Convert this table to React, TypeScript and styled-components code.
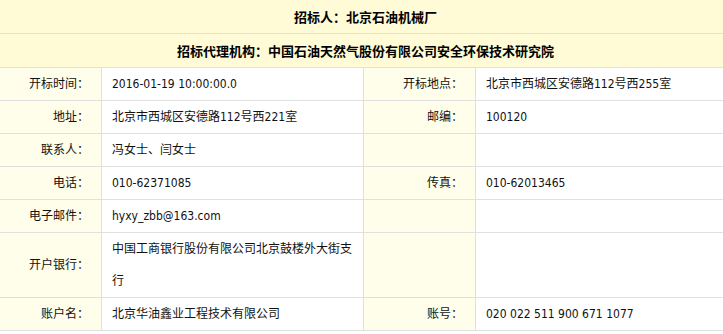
import React from "react";
import styled, { createGlobalStyle } from "styled-components";

const Global = createGlobalStyle`
  html, body { margin: 0; padding: 0; background: #fff; overflow: hidden; }
  body { font-family: "DejaVu Sans Condensed", "DejaVu Sans", "Noto Sans CJK SC", sans-serif; }
`;

const Table = styled.div`
  width: 731px;
  display: grid;
  grid-template-columns: 101px 261px 111px 1fr;
  grid-template-rows: 33px 33px repeat(5, 32px) 64px 32px;
  gap: 1px;
  background: #e0e0e0;
  border-bottom: 1px solid #e0e0e0;
  font-size: 12px;
  color: #111;
`;

const HeaderCell = styled.div`
  grid-column: 1 / -1;
  line-height: 33px;
  background: #fffbd7;
  text-align: center;
  font-family: "Noto Sans CJK SC", sans-serif;
  font-weight: bold;
  font-size: 13px;
  color: #000;
`;

const Label = styled.div<{ $tall?: boolean }>`
  background: #fefeea;
  text-align: right;
  padding-right: 12px;
  line-height: ${(p) => (p.$tall ? "64px" : "32px")};
  white-space: nowrap;
`;

const Value = styled.div`
  background: #fff;
  padding: 0 10px;
  line-height: 32px;
`;

const RowGroup = styled.div`
  display: contents;
`;

type Row = { l1: string; v1: string; l2?: string; v2?: string; tall?: boolean };

const rows: Row[] = [
  { l1: "开标时间：", v1: "2016-01-19 10:00:00.0", l2: "开标地点：", v2: "北京市西城区安德路112号西255室" },
  { l1: "地址：", v1: "北京市西城区安德路112号西221室", l2: "邮编：", v2: "100120" },
  { l1: "联系人：", v1: "冯女士、闫女士" },
  { l1: "电话：", v1: "010-62371085", l2: "传真：", v2: "010-62013465" },
  { l1: "电子邮件：", v1: "hyxy_zbb@163.com" },
  { l1: "开户银行：", v1: "中国工商银行股份有限公司北京鼓楼外大街支行", tall: true },
  { l1: "账户名：", v1: "北京华油鑫业工程技术有限公司", l2: "账号：", v2: "020 022 511 900 671 1077" },
];

export default function App() {
  return (
    <>
      <Global />
      <Table>
        <HeaderCell>招标人：北京石油机械厂</HeaderCell>
        <HeaderCell>招标代理机构：中国石油天然气股份有限公司安全环保技术研究院</HeaderCell>
        {rows.map((r, i) => (
          <RowGroup key={i}>
            <Label $tall={r.tall}>{r.l1}</Label>
            <Value>{r.v1}</Value>
            <Label $tall={r.tall}>{r.l2 ?? ""}</Label>
            <Value>{r.v2 ?? ""}</Value>
          </RowGroup>
        ))}
      </Table>
    </>
  );
}
